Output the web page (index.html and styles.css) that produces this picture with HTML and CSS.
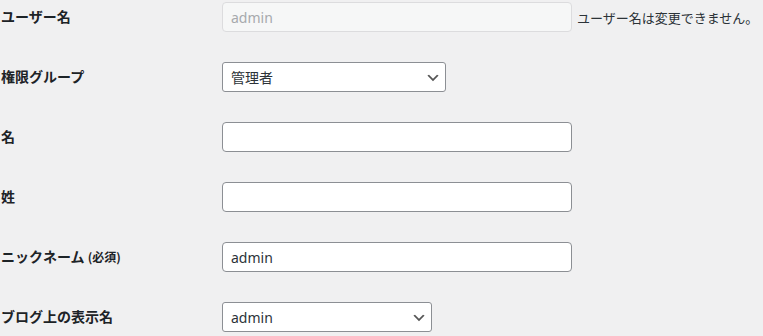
FILE: index.html
```html
<!DOCTYPE html>
<html lang="ja">
<head>
  <meta charset="UTF-8">
  <title>プロフィール</title>
  <link rel="stylesheet" href="styles.css">
</head>
<body>

<div class="form-table">
  <div class="row">
    <label class="label" for="user_login">ユーザー名</label>
    <div class="field">
      <input type="text" id="user_login" class="text regular" value="admin" disabled>
      <span class="description">ユーザー名は変更できません。</span>
    </div>
  </div>

  <div class="row">
    <label class="label" for="role">権限グループ</label>
    <div class="field">
      <span class="select-wrap role">
        <select id="role" class="select">
          <option selected>管理者</option>
          <option>編集者</option>
          <option>投稿者</option>
          <option>寄稿者</option>
          <option>購読者</option>
        </select>
        <svg class="arrow" width="16" height="16" viewBox="0 0 20 20"><path d="M5 6l5 5 5-5 2 1-7 7-7-7 2-1z" fill="#555"/></svg>
      </span>
    </div>
  </div>

  <div class="row">
    <label class="label" for="first_name">名</label>
    <div class="field">
      <input type="text" id="first_name" class="text regular" value="">
    </div>
  </div>

  <div class="row">
    <label class="label" for="last_name">姓</label>
    <div class="field">
      <input type="text" id="last_name" class="text regular" value="">
    </div>
  </div>

  <div class="row">
    <label class="label" for="nickname">ニックネーム <span class="required">(必須)</span></label>
    <div class="field">
      <input type="text" id="nickname" class="text regular" value="admin">
    </div>
  </div>

  <div class="row">
    <label class="label" for="display_name">ブログ上の表示名</label>
    <div class="field">
      <span class="select-wrap display">
        <select id="display_name" class="select">
          <option selected>admin</option>
        </select>
        <svg class="arrow" width="16" height="16" viewBox="0 0 20 20"><path d="M5 6l5 5 5-5 2 1-7 7-7-7 2-1z" fill="#555"/></svg>
      </span>
    </div>
  </div>
</div>

</body>
</html>
```

FILE: styles.css
```css
body {
  margin: 0;
  background-color: #f0f0f1;
  color: #1d2327;
  font-family: "Noto Sans", "Noto Sans CJK JP", sans-serif;
  font-size: 14px;
}
.form-table {
  padding-top: 2px;
}
.row {
  display: flex;
  align-items: center;
  height: 30px;
  margin-bottom: 30px;
}
.label {
  flex: none;
  width: 222px;
  padding-left: 1px;
  padding-bottom: 2px;
  box-sizing: border-box;
  font-family: "Noto Sans CJK JP", sans-serif;
  font-weight: 700;
  font-size: 14px;
  line-height: 1.3;
}
.required {
  font-size: 12px;
}
.field {
  display: flex;
  align-items: center;
  gap: 5px;
}
.text {
  box-sizing: border-box;
  height: 30px;
  padding: 0 8px;
  border: 1px solid #8c8f94;
  border-radius: 4px;
  background: #fff;
  color: #2c3338;
  font-family: inherit;
  font-size: 14px;
}
.regular {
  width: 350px;
}
.text:disabled {
  background: #f6f7f7;
  border-color: #dcdcde;
  color: #a7aaad;
}
.description {
  font-family: "Noto Sans CJK JP", sans-serif;
  font-size: 13px;
  color: #2c3338;
}
.select-wrap {
  position: relative;
  display: inline-block;
}
.select {
  -webkit-appearance: none;
  appearance: none;
  box-sizing: border-box;
  height: 30px;
  padding: 0 24px 0 8px;
  border: 1px solid #8c8f94;
  border-radius: 3px;
  background: #fff;
  color: #2c3338;
  font-family: "Noto Sans", "Noto Sans CJK JP", sans-serif;
  font-size: 14px;
}
.role .select {
  width: 224px;
}
.display .select {
  width: 210px;
}
.arrow {
  position: absolute;
  right: 5px;
  top: 8px;
  pointer-events: none;
}
```
